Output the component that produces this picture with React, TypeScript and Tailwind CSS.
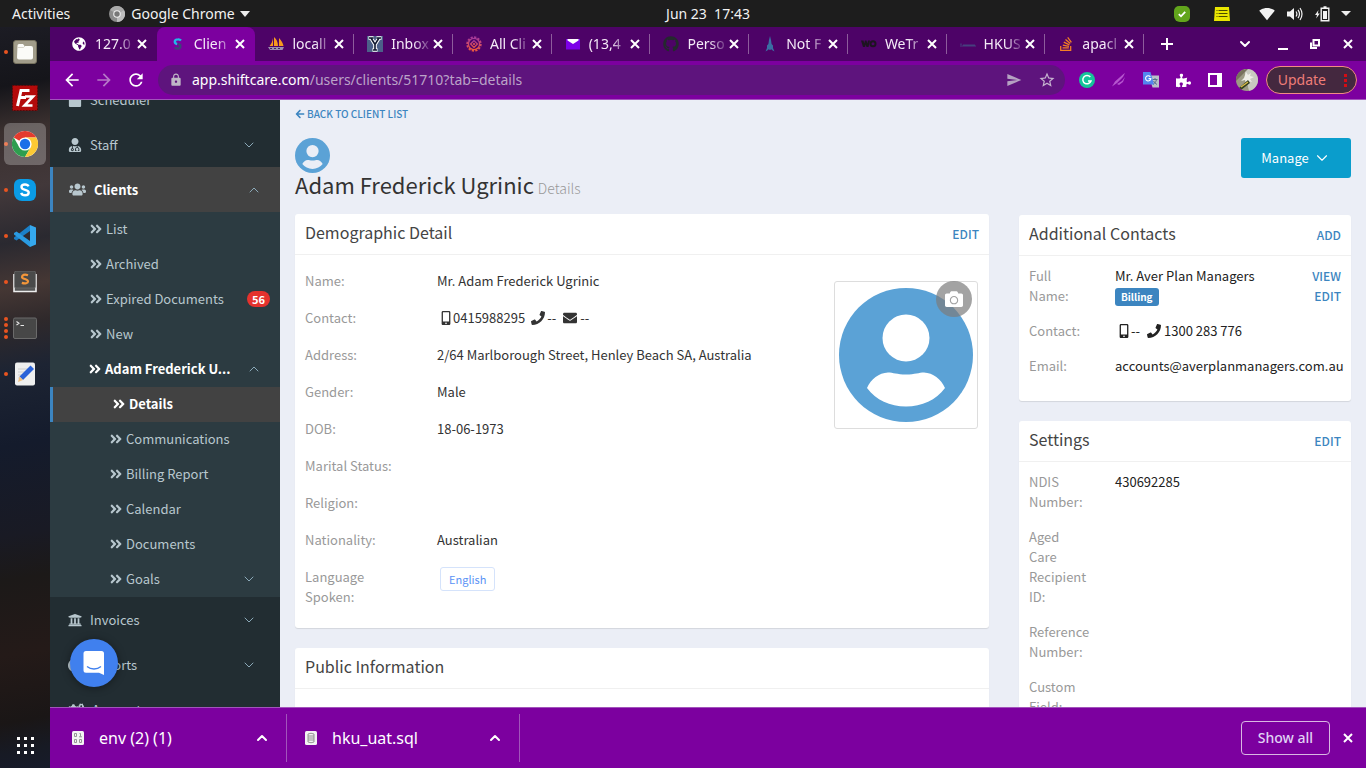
import React from "react";
import {
  FaAngleDoubleRight,
  FaArrowLeft,
  FaCamera,
  FaCalendar,
  FaChartPie,
  FaCogs,
  FaEnvelope,
  FaGithub,
  FaGlobeAmericas,
  FaMobileAlt,
  FaPhone,
  FaPuzzlePiece,
  FaStackOverflow,
  FaUniversity,
  FaUserMd,
  FaUsers,
} from "react-icons/fa";
import {
  MdArrowBack,
  MdArrowForward,
  MdLock,
  MdRefresh,
  MdSend,
  MdSignalWifi4Bar,
  MdStarBorder,
} from "react-icons/md";
import { ChevronDown, ChevronUp } from "lucide-react";

/* ---------- Favicons ---------- */

const ShiftcareIcon = () => (
  <svg viewBox="0 0 16 16" className="size-4">
    <path d="M11 4.500A3.600 3.600 0 0 0 8 3.400C6 3.400 4.800 4.400 4.800 5.700 4.800 7.100 6 7.800 7.200 8" fill="none" stroke="#22b8e8" strokeWidth="2.400" />
    <path d="M7.800 8c1.500.2 2.600.9 2.600 2.200 0 1.500-1.200 2.400-2.800 2.400-1.200 0-2.100-.4-2.800-1.200" fill="none" stroke="#3d4478" strokeWidth="2.400" />
  </svg>
);

const SailIcon = () => (
  <svg viewBox="0 0 16 16" className="size-4">
    <path d="M5 2v8H1.500C3.500 8 4.500 5 5 2zM6 1c2.500 2 4 5 4 9H6zM11 2c2.500 2.500 4 5.500 4.500 8H11z" fill="#f79a1e" />
    <path d="M0 11h16l-1.500 3H2z" fill="#9a8fb0" />
    <path d="M2 12.500h2m2 0h2m2 0h2" stroke="#3b2a60" strokeWidth="1" />
  </svg>
);

const YIcon = () => (
  <svg viewBox="0 0 16 16" className="size-4">
    <rect width="16" height="16" fill="#4c6089" />
    <path d="M1.500 2h5M9.500 2h5M4 2l4 6.500L12 2M8 8v6M5.500 14h5" fill="none" stroke="#fff" strokeWidth="3.600" />
    <path d="M2 2h4.500M9.500 2H14M4 2l4 6.500L12 2M8 8v6M6 14h4" fill="none" stroke="#101830" strokeWidth="1.600" />
  </svg>
);

const GearIcon = () => (
  <svg viewBox="0 0 16 16" className="size-4">
    <defs>
      <linearGradient id="gear" x1="0" y1="0" x2="0" y2="1">
        <stop offset="0" stopColor="#a83a9a" />
        <stop offset="1" stopColor="#f05a3c" />
      </linearGradient>
    </defs>
    <circle cx="8" cy="8" r="6.800" fill="none" stroke="url(#gear)" strokeWidth="1.800" strokeDasharray="2.200 1.350" />
    <circle cx="8" cy="8" r="5.600" fill="none" stroke="url(#gear)" strokeWidth="1.300" />
    <path d="M8 4.600 11.400 8 8 11.400 4.600 8z" fill="none" stroke="url(#gear)" strokeWidth="1.300" />
    <circle cx="8" cy="8" r="1.100" fill="#e0565a" />
  </svg>
);

const MailIcon = () => (
  <svg viewBox="0 0 16 16" className="size-4">
    <rect x="1" y="3" width="14" height="10.500" fill="#7d00e8" />
    <path d="M2.500 3h11v1.500L8 8 2.500 4.500z" fill="#fff" />
  </svg>
);

const TowerIcon = () => (
  <svg viewBox="0 0 16 16" className="size-4">
    <path d="M8 0l1 4 .6 4 1.400 1.500V12l1.500 3.500L10 14l-1-1-.5 1h-1L7 13l-1 1-2.500 1.500L5 12V9.500L6.400 8 7 4z" fill="#3a6fa3" />
  </svg>
);

const WeIcon = () => (
  <svg viewBox="0 0 16 16" className="size-4">
    <path d="M0 4.500h2.500l.7 3 .8-3h1.500l.8 3 .7-3H9L7.500 11h-2l-.8-2.500L4 11H2z" fill="#1c1420" />
    <circle cx="12" cy="7.800" r="2.500" fill="none" stroke="#1c1420" strokeWidth="2" />
  </svg>
);

const HkuIcon = () => (
  <svg viewBox="0 0 16 16" className="size-4">
    <path d="M0 10h16M1 9V7.500M3 9h12" stroke="#46407e" strokeWidth="1.200" fill="none" />
  </svg>
);

const CloseIcon = () => (
  <svg viewBox="0 0 10 10" className="size-[10px]" stroke="currentColor" strokeWidth="2">
    <path d="M1 1l8 8M9 1 1 9" />
  </svg>
);

const tabs = [
  { label: "127.0", icon: <FaGlobeAmericas className="size-[14px] text-white" /> },
  { label: "Clien", icon: <ShiftcareIcon />, active: true },
  { label: "locall", icon: <SailIcon /> },
  { label: "Inbox", icon: <YIcon /> },
  { label: "All Cli", icon: <GearIcon /> },
  { label: "(13,4", icon: <MailIcon /> },
  { label: "Perso", icon: <FaGithub className="size-4 text-[#24292e]" /> },
  { label: "Not F", icon: <TowerIcon /> },
  { label: "WeTr", icon: <WeIcon /> },
  { label: "HKUS", icon: <HkuIcon /> },
  { label: "apacl", icon: <FaStackOverflow className="size-4 text-[#f48024]" /> },
];

/* ---------- Desktop top bar ---------- */

function TopBar() {
  return (
    <header className="grid h-[27px] shrink-0 grid-cols-3 items-center bg-[#1d1d1d] px-3 text-sm text-[#f2f2f2]">
      <div className="flex items-center">
        <span>Activities</span>
        <svg viewBox="0 0 16 16" className="ml-[39px] size-4">
          <circle cx="8" cy="8" r="8" fill="#8b8b8b" />
          <path d="M8 8 1.100 4A8 8 0 0 1 15 4z" fill="#a9a9a9" />
          <path d="M8 8l7-4a8 8 0 0 1-7 12z" fill="#bdbdbd" />
          <circle cx="8" cy="8" r="3.800" fill="#eee" />
          <circle cx="8" cy="8" r="2.700" fill="#777" />
        </svg>
        <span className="ml-[6px]">Google Chrome</span>
        <svg viewBox="0 0 10 6" className="ml-[5px] h-[6px] w-[10px]">
          <path d="M0 0h10L5 6z" fill="#eee" />
        </svg>
      </div>
      <div className="pl-[50px] text-center whitespace-pre">Jun 23  17:43</div>
      <div className="flex items-center justify-end pr-[3px]">
        <svg viewBox="0 0 16 16" className="mr-[24px] size-4">
          <path d="M5 0h6a5 5 0 0 1 5 5v6a5 5 0 0 1-5 5H6a6 6 0 0 1-6-6V5a5 5 0 0 1 5-5z" fill="#62a51c" />
          <path d="M4.800 8.200 7 10.300l4.200-4.500" fill="none" stroke="#fff" strokeWidth="1.800" />
        </svg>
        <svg viewBox="0 0 16 14" className="mr-[29px] h-[14px] w-4">
          <path d="M1 0h14l1 14H0z" fill="#e9e600" />
          <path d="M2.500 3.500h1m1 0h9M2.500 6.500h1m1 0h9M2.500 9.500h1m1 0h9" stroke="#4a4a00" strokeWidth="1.200" />
        </svg>
        <MdSignalWifi4Bar className="mr-[12px] size-4 text-[#f2f2f2]" />
        <svg viewBox="0 0 16 14" className="mr-[12px] h-[14px] w-4" fill="none" stroke="#f2f2f2">
          <path d="M0 4.500h3L7 1v12L3 9.500H0z" fill="#f2f2f2" stroke="none" />
          <path d="M9 4.500q1.800 2.500 0 5M11 2.800q3 4.200 0 8.400M13 1q4 6 0 12" strokeWidth="1.200" />
        </svg>
        <svg viewBox="0 0 15 16" className="mr-[11px] h-4 w-[15px]">
          <path d="M3.500 4 0 9h2l-.8 3.500L4.800 7.500h-2z" fill="#f2f2f2" />
          <path d="M6.200 2.200h7.600v12.600H6.200zM8.500 1h3" fill="none" stroke="#f2f2f2" strokeWidth="1.400" />
          <path d="M8 5h4v8H8z" fill="#f2f2f2" />
        </svg>
        <svg viewBox="0 0 10 5" className="h-[5px] w-[10px]">
          <path d="M0 0h10L5 5z" fill="#eee" />
        </svg>
      </div>
    </header>
  );
}

/* ---------- Dock ---------- */

const FilesIcon = () => (
  <svg viewBox="0 0 24 24" className="size-6">
    <rect x="0.500" y="0.500" width="23" height="23" rx="2.500" fill="#a19c8a" stroke="#77725f" />
    <path d="M4.500 5.500a1.500 1.500 0 0 1 1.500-1.500h4l1.500 2H18a2 2 0 0 1 2 2v9.500a2 2 0 0 1-2 2H6a2 2 0 0 1-2-2z" fill="#fbfbf8" />
    <path d="M4.500 7.500h6l1.500-1.500" fill="none" stroke="#d0cdc0" strokeWidth=".8" />
  </svg>
);

const FilezillaIcon = () => (
  <svg viewBox="0 0 26 26" className="size-[26px]">
    <rect x="0.500" y="0.500" width="25" height="25" fill="#b30a0a" />
    <rect x="0.500" y="0.500" width="25" height="25" fill="none" stroke="#5e0505" strokeDasharray="1.500 1.500" />
    <path d="M5.500 21 9 5.500h8.500M8 12.500h6" fill="none" stroke="#fff" strokeWidth="3" />
    <path d="M13 11.500h8l-8.500 9h8" fill="none" stroke="#fff" strokeWidth="2.600" />
  </svg>
);

const ChromeIcon = () => (
  <svg viewBox="0 0 26 26" className="size-[26px]">
    <circle cx="13" cy="13" r="13" fill="#fff" />
    <path d="M13 13 1.740 6.500A13 13 0 0 1 24.260 6.500H13z" fill="#e33b2e" />
    <path d="M13 13 7.400 16.200 1.740 6.500A13 13 0 0 0 13 26l5.600-9.700z" fill="#2f9e4f" />
    <path d="M13 6.500h11.260A13 13 0 0 1 13 26l5.700-9.800z" fill="#fcc934" />
    <circle cx="13" cy="13" r="6.600" fill="#fff" />
    <circle cx="13" cy="13" r="5.200" fill="#1a6fe8" />
  </svg>
);

const SkypeIcon = () => (
  <svg viewBox="0 0 22 22" className="size-[22px]">
    <path d="M6 0h8a8 8 0 0 1 8 8v8a6 6 0 0 1-6 6H8a8 8 0 0 1-8-8V6a6 6 0 0 1 6-6z" fill="#0a9be6" />
    <path d="M14.500 7.400C14 6.200 12.700 5.500 11 5.500c-2 0-3.500.9-3.500 2.500 0 3.800 7.200 1.800 7.200 5.500 0 1.800-1.600 2.800-3.600 2.800-1.900 0-3.400-.8-3.900-2.400" fill="none" stroke="#fff" strokeWidth="2.400" />
  </svg>
);

const CodeIcon = () => (
  <svg viewBox="0 0 24 24" className="size-6">
    <path d="M17 1v6L3.500 16.500 1 15v-1.500z" fill="#1b80c8" />
    <path d="M17 23v-6L3.500 7.500 1 9v1.500z" fill="#2a9be2" />
    <path d="M17 1l6 2.500v17L17 23z" fill="#35a8ee" />
  </svg>
);

const SublimeIcon = () => (
  <svg viewBox="0 0 24 22" className="h-[22px] w-6">
    <path d="M1 3v17.500h22V3" fill="#555" stroke="#eee" strokeWidth="1.600" />
    <rect x="1.500" y="0" width="21" height="17" rx="1.500" fill="#4a4a4a" stroke="#777" strokeWidth=".6" />
    <path d="M15 4.300C11.500 3 9 4 9 5.900c0 2.400 6 1.900 6 4.500 0 1.900-2.700 2.500-6.200 1.500" fill="none" stroke="#f3963a" strokeWidth="2.200" />
  </svg>
);

const TerminalIcon = () => (
  <svg viewBox="0 0 24 22" className="h-[22px] w-6">
    <rect x="0.500" y="1" width="23" height="20.500" rx="1.500" fill="#474747" stroke="#6b6b6b" />
    <path d="M3.500 4.500 6 6.300 3.500 8M7.500 8.500h3.500" fill="none" stroke="#e8e8e8" strokeWidth="1.100" />
  </svg>
);

const EditorIcon = () => (
  <svg viewBox="0 0 22 24" className="h-6 w-[22px]">
    <rect x="1" y="0.500" width="20" height="23" rx="2" fill="#efefef" />
    <path d="M4 7h10M4 10h9M4 13h6M4 16h4" stroke="#cfcfcf" />
    <path d="M16.500 3.500 20 7 9 18l-3.500-3.500z" fill="#2a62d8" />
    <path d="M5.500 14.500 9 18l-5 2z" fill="#f0c080" />
  </svg>
);

const dock = [
  { name: "Files", icon: <FilesIcon />, dots: 1 },
  { name: "FileZilla", icon: <FilezillaIcon />, dots: 0 },
  { name: "Google Chrome", icon: <ChromeIcon />, dots: 1, active: true },
  { name: "Skype", icon: <SkypeIcon />, dots: 1 },
  { name: "Visual Studio Code", icon: <CodeIcon />, dots: 1 },
  { name: "Sublime Text", icon: <SublimeIcon />, dots: 1 },
  { name: "Terminal", icon: <TerminalIcon />, dots: 4 },
  { name: "Text Editor", icon: <EditorIcon />, dots: 1 },
];

function Dock() {
  return (
    <nav
      aria-label="Dock"
      className="flex w-[50px] shrink-0 flex-col justify-between bg-[linear-gradient(170deg,#1c1c24_0%,#15151a_8%,#3a302f_14%,#42383a_22%,#2a2930_29%,#453734_35%,#2f292b_40%,#1d2433_46%,#141b2c_56%,#191a24_68%,#1c1918_74%,#241a18_84%,#1a1616_93%,#171a24_97%,#171b2a_100%)] pt-[2px] pb-[14px]"
    >
      <ul>
        {dock.map((d) => (
          <li key={d.name} className="flex h-[46px] items-center">
            <span className="flex w-1 flex-col items-end gap-[2px]">
              {Array.from({ length: d.dots }, (_, i) => (
                <i key={i} className="-mr-1 block size-1 shrink-0 rounded-full bg-[#e95420]" />
              ))}
            </span>
            <button
              aria-label={d.name}
              className={
                d.active
                  ? "flex h-[42px] w-[42px] items-center justify-center rounded-md bg-white/25"
                  : "flex h-[42px] w-[42px] items-center justify-center rounded-md"
              }
            >
              {d.icon}
            </button>
          </li>
        ))}
      </ul>
      <button aria-label="Show applications" className="mx-auto grid grid-cols-3 gap-[4px]">
        {Array.from({ length: 9 }, (_, i) => (
          <i key={i} className="block size-[3px] bg-white" />
        ))}
      </button>
    </nav>
  );
}

/* ---------- Browser chrome ---------- */

function TabStrip() {
  return (
    <div className="flex h-[34px] shrink-0 items-stretch bg-[#4d0367] pl-2">
      <div className="flex max-w-[1086px] min-w-0 flex-1">
        {tabs.map((t, i) => (
          <div
            key={t.label}
            className={
              t.active
                ? "flex min-w-0 flex-1 items-center rounded-t-lg bg-[#7c009f] pl-[13px]"
                : "flex min-w-0 flex-1 items-center pl-[13px]"
            }
          >
            <span className="flex w-4 shrink-0 justify-center">{t.icon}</span>
            <span className="ml-2 min-w-0 flex-1 mask-r-from-60% mask-r-to-110% text-sm whitespace-nowrap text-[#f4eaf7]">
              {t.label}
            </span>
            <button aria-label={"Close " + t.label} className="ml-1 shrink-0 text-white">
              <CloseIcon />
            </button>
            <span className={i > 1 ? "ml-[9px] h-5 w-px bg-[#8d5c9c]" : "ml-[9px] h-5 w-px"} />
          </div>
        ))}
      </div>
      <button aria-label="New tab" className="ml-[17px] text-white">
        <svg viewBox="0 0 12 12" className="size-3" stroke="currentColor" strokeWidth="2">
          <path d="M6 0v12M0 6h12" />
        </svg>
      </button>
      <div className="ml-auto flex items-center pr-[13px] text-white">
        <button aria-label="Search tabs">
          <ChevronDown className="size-4" strokeWidth={3} />
        </button>
        <button aria-label="Minimise" className="ml-[25px] flex h-3 items-end">
          <span className="block h-[2px] w-[10px] bg-white" />
        </button>
        <button aria-label="Restore" className="ml-[22px]">
          <svg viewBox="0 0 10 10" className="size-[10px]" fill="none" stroke="currentColor" strokeWidth="2">
            <path d="M3.500 1H9v5.500H3.500zM1 3.500V9h6" />
          </svg>
        </button>
        <button aria-label="Close window" className="ml-[23px]">
          <CloseIcon />
        </button>
      </div>
    </div>
  );
}

function Toolbar() {
  return (
    <div className="flex h-[39px] shrink-0 items-center border-b border-[#a254bb] bg-[#7c009f] pr-[9px] pl-3 text-white">
      <button aria-label="Back">
        <MdArrowBack className="size-5" />
      </button>
      <button aria-label="Forward" className="ml-3 text-[#b678c8]">
        <MdArrowForward className="size-5" />
      </button>
      <button aria-label="Reload" className="ml-3">
        <MdRefresh className="size-5" />
      </button>
      <div className="ml-3 flex h-[30px] min-w-0 flex-1 items-center rounded-full bg-[#5e147d] pr-[9px] pl-[11px]">
        <MdLock className="size-[14px] shrink-0 text-[#bfb6c6]" />
        <div className="ml-[9px] min-w-0 flex-1 truncate text-sm text-[#bba3c8]">
          <span className="text-white">app.shiftcare.com</span>/users/clients/51710?tab=details
        </div>
        <button aria-label="Send this page" className="text-[#b5a2c2]">
          <MdSend className="size-4" />
        </button>
        <button aria-label="Bookmark this page" className="ml-4 text-[#c6b4d0]">
          <MdStarBorder className="size-[18px]" />
        </button>
      </div>
      <button aria-label="Grammarly" className="ml-[14px]">
        <svg viewBox="0 0 16 16" className="size-4">
          <circle cx="8" cy="8" r="8" fill="#15c39a" />
          <path d="M11.300 5A4.200 4.200 0 1 0 12 9H9" fill="none" stroke="#fff" strokeWidth="1.500" />
        </svg>
      </button>
      <button aria-label="Feather extension" className="ml-4">
        <svg viewBox="0 0 16 16" className="size-4">
          <path d="M1 14.500 4 9.500 12.500 2 14 1l-2 4-6 6zM6 12l5-3 3-4-2 5-4 3z" fill="#b655cf" />
        </svg>
      </button>
      <button aria-label="Google Translate" className="ml-4">
        <svg viewBox="0 0 16 16" className="size-4">
          <path d="M6 3.500h10v12H9.500z" fill="#b9c1c9" />
          <path d="M9.500 7.500h5M12 6v1.500M13.500 7.500c-.5 2.500-2 4-3.500 5M10.500 9c.8 1.500 2 2.500 3.500 3.500" fill="none" stroke="#56708a" />
          <path d="M0 0h7.500L11 12.500H0z" fill="#5386ee" />
          <path d="M7.300 4.800A2.600 2.600 0 1 0 7.800 6.600H5.500" fill="none" stroke="#fff" strokeWidth="1.100" />
        </svg>
      </button>
      <button aria-label="Extensions" className="ml-[17px]">
        <FaPuzzlePiece className="size-[15px]" />
      </button>
      <button aria-label="Side panel" className="ml-[17px]">
        <svg viewBox="0 0 14 14" className="size-[14px]">
          <path d="M1 1h12v12H1z" fill="none" stroke="#fff" strokeWidth="2" />
          <path d="M9 1h4v12H9z" fill="#fff" />
        </svg>
      </button>
      <button aria-label="Profile" className="ml-[14px]">
        <svg viewBox="0 0 22 22" className="size-[22px]">
          <defs>
            <clipPath id="face">
              <circle cx="11" cy="11" r="11" />
            </clipPath>
          </defs>
          <g clipPath="url(#face)">
            <rect width="22" height="22" fill="#9c9a84" />
            <path d="M8 0h14v22h-9z" fill="#c9cac0" />
            <path d="M0 12 12 0H0z" fill="#77715c" />
            <path d="M10 3l2 3 3-2-1 3 4 1-4 2 2 3-4-1-2 3-1-4-4 1 3-3z" fill="#eeeee6" />
            <path d="M3 19 12 11l2 3-9 7z" fill="#33401f" />
            <path d="M5 18l7-5" stroke="#e0c04a" strokeWidth="1.200" />
          </g>
        </svg>
      </button>
      <button className="ml-2 flex h-7 items-center rounded-full border border-[#f28b82] bg-[#44283f] pr-[9px] pl-[11px] text-sm text-[#ee7d78]">
        Update
        <span className="ml-[18px] flex flex-col gap-[2px]">
          <i className="block size-[3px] bg-[#d40c14]" />
          <i className="block size-[3px] bg-[#d40c14]" />
          <i className="block size-[3px] bg-[#d40c14]" />
        </span>
      </button>
    </div>
  );
}

function Downloads() {
  return (
    <footer className="flex h-[61px] shrink-0 items-center border-t border-[#a254bb] bg-[#7c009f] pr-[13px] text-white">
      <div className="flex h-12 w-[237px] items-center border-r border-[#a254bb] pr-4 pl-[22px]">
        <svg viewBox="0 0 12 14" className="h-[14px] w-3">
          <rect width="12" height="14" rx="1.500" fill="#f3f3f3" />
          <path d="M2.500 2.500h2v3h-2zM2.500 8.500h2v3h-2zM7.500 8.500h2v3h-2zM7.500 2.500h1v3M7 5.800h3" fill="none" stroke="#8a8a8a" strokeWidth=".9" />
        </svg>
        <span className="ml-[15px] flex-1 text-base">env (2) (1)</span>
        <button aria-label="Options for env (2) (1)">
          <ChevronUp className="size-4" strokeWidth={3} />
        </button>
      </div>
      <div className="flex h-12 w-[233px] items-center border-r border-[#a254bb] pr-4 pl-[18px]">
        <svg viewBox="0 0 12 14" className="h-[14px] w-3">
          <rect width="12" height="14" rx="1.500" fill="#f3f3f3" />
          <path d="M3 3q3-1.500 6 0v8q-3 1.500-6 0zM3 5h6M3 7h6M3 9h6" fill="none" stroke="#8a8a8a" strokeWidth=".9" />
        </svg>
        <span className="ml-[15px] flex-1 text-base">hku_uat.sql</span>
        <button aria-label="Options for hku_uat.sql">
          <ChevronUp className="size-4" strokeWidth={3} />
        </button>
      </div>
      <button className="ml-auto h-[34px] w-[89px] rounded border border-[#d9b8e3] text-sm font-medium text-[#e0d4f5]">Show all</button>
      <button aria-label="Close downloads" className="ml-[13px]">
        <CloseIcon />
      </button>
    </footer>
  );
}

/* ---------- Application sidebar ---------- */

type NavProps = {
  label: string;
  icon: React.ReactNode;
  open?: boolean;
  closed?: boolean;
  active?: boolean;
};

const OpenMark = () => <ChevronUp className="size-4 text-[#8ba9b8]" strokeWidth={1.500} />;
const ClosedMark = () => <ChevronDown className="size-4 text-[#8ba9b8]" strokeWidth={1.500} />;

function NavItem({ label, icon, open, closed, active }: NavProps) {
  return (
    <li>
      <a
        href="#"
        className={
          active
            ? "flex h-[45px] items-center border-l-[3px] border-[#3c85c0] bg-[#424242] pr-[18px] pl-4 font-bold text-white"
            : "flex h-[45px] items-center border-l-[3px] border-transparent pr-[23px] pl-[15px]"
        }
      >
        <span className="text-[#b8c7ce]">{icon}</span>
        <span className="ml-2 flex-1">{label}</span>
        {open && <OpenMark />}
        {closed && <ClosedMark />}
      </a>
    </li>
  );
}

type SubProps = {
  label: string;
  deep?: boolean;
  active?: boolean;
  bold?: boolean;
  children?: React.ReactNode;
};

function SubItem({ label, deep, active, bold, children }: SubProps) {
  const tone = active
    ? "flex h-[35px] items-center border-l-[3px] border-[#3c85c0] bg-[#424242] pb-[2px] pl-[59px] font-bold text-white"
    : deep
      ? "flex h-[35px] items-center pb-[2px] pr-[23px] pl-[59px]"
      : bold
        ? "flex h-[35px] items-center pb-[2px] pr-[18px] pl-[38px] font-bold text-white"
        : "flex h-[35px] items-center pb-[2px] pr-[10px] pl-[39px]";
  return (
    <li>
      <a href="#" className={tone}>
        <FaAngleDoubleRight className="size-[14px] shrink-0" />
        <span className="ml-[3px] flex-1 whitespace-nowrap">{label}</span>
        {children}
      </a>
    </li>
  );
}

function Sidebar() {
  return (
    <aside className="relative w-[230px] shrink-0 overflow-hidden bg-[#222d32] font-['Noto_Sans_CJK_SC',sans-serif] text-[13px] text-[#b8c7ce]">
      <ul className="-mt-[23px]">
        <NavItem label="Scheduler" icon={<FaCalendar className="size-[14px]" />} />
        <NavItem label="Staff" icon={<FaUserMd className="size-[14px]" />} closed />
        <NavItem label="Clients" icon={<FaUsers className="size-[17px]" />} open active />
        <li>
          <ul className="bg-[#2c3b41]">
            <SubItem label="List" />
            <SubItem label="Archived" />
            <SubItem label="Expired Documents">
              <span className="rounded-full bg-[#e5322d] px-[5px] text-[11px] leading-4 font-bold text-white">56</span>
            </SubItem>
            <SubItem label="New" />
            <SubItem label="Adam Frederick U..." bold>
              <OpenMark />
            </SubItem>
            <SubItem label="Details" deep active />
            <SubItem label="Communications" deep />
            <SubItem label="Billing Report" deep />
            <SubItem label="Calendar" deep />
            <SubItem label="Documents" deep />
            <SubItem label="Goals" deep>
              <ClosedMark />
            </SubItem>
          </ul>
        </li>
        <NavItem label="Invoices" icon={<FaUniversity className="size-[14px]" />} closed />
        <NavItem label="Reports" icon={<FaChartPie className="size-[14px]" />} closed />
        <NavItem label="Account" icon={<FaCogs className="size-4" />} closed />
      </ul>
      <button
        aria-label="Open messenger"
        className="absolute bottom-5 left-5 flex size-12 items-center justify-center rounded-full bg-[#4080ee] shadow-[0_1px_8px_rgba(0,0,0,0.4)]"
      >
        <svg viewBox="0 0 24 26" className="h-[26px] w-6">
          <path d="M4 1h15.500a2.500 2.500 0 0 1 2.500 2.500V25l-5-2.200H4A2.500 2.500 0 0 1 1.500 20.300V3.500A2.500 2.500 0 0 1 4 1z" fill="#fff" />
          <path d="M5 16.500c4 3.300 10 3.300 14 0" fill="none" stroke="#4080ee" strokeWidth="1.300" />
        </svg>
      </button>
    </aside>
  );
}

/* ---------- Client page ---------- */

function Card({ title, action, children }: { title: string; action?: string; children?: React.ReactNode }) {
  return (
    <section className="rounded-[3px] bg-white shadow-[0_1px_1px_rgba(0,0,0,0.1)]">
      <header className="flex h-[41px] items-center justify-between border-b border-[#f0f0f0] px-[10px] pb-1">
        <h2 className="text-base leading-5">{title}</h2>
        {action && (
          <a href="#" className="pt-1 text-xs font-medium text-[#3c85c0]">
            {action}
          </a>
        )}
      </header>
      {children}
    </section>
  );
}

function Row({ label, children }: { label: string; children?: React.ReactNode }) {
  return (
    <div className="flex">
      <dt className="w-[132px] shrink-0 pr-10 text-[#999]">{label}</dt>
      <dd className="flex-1 text-[#333]">{children}</dd>
    </div>
  );
}

function SideRow({ label, children }: { label: string; children?: React.ReactNode }) {
  return (
    <div className="flex">
      <dt className="w-[86px] shrink-0 whitespace-pre-line text-[#999]">{label}</dt>
      <dd className="flex min-w-0 flex-1 justify-between text-[#222]">{children}</dd>
    </div>
  );
}

const Avatar = ({ className }: { className: string }) => (
  <svg viewBox="0 0 134 134" className={className}>
    <circle cx="67" cy="67" r="67" fill="#5ba2d6" />
    <ellipse cx="67" cy="50" rx="23.500" ry="23.500" fill="currentColor" />
    <path d="M28 100c4-9 12-15 21-15.500 5 0 9 2 18 2s13-2 18-2c9 .5 17 6.500 21 15.500-9 12-23 18.500-39 18.500S37 112 28 100z" fill="currentColor" />
  </svg>
);

function ClientPage() {
  return (
    <main className="min-w-0 flex-1 overflow-hidden bg-[#ebeef6] px-[15px] pt-1 font-['Noto_Sans_CJK_SC',sans-serif] text-[13px] leading-5 text-[#444]">
      <a href="#" className="flex h-5 items-center text-[10px] font-medium text-[#3c85c0]">
        <FaArrowLeft className="mr-[2px] size-[10px]" />
        BACK TO CLIENT LIST
      </a>
      <div className="mt-[14px] flex items-start justify-between">
        <div>
          <Avatar className="size-[35px] text-[#ebeef6]" />
          <h1 className="text-[22px] leading-[22px] text-[#333]">
            Adam Frederick Ugrinic
            <small className="ml-1 text-sm leading-[22px] font-light text-[#999]">Details</small>
          </h1>
        </div>
        <button className="flex h-10 w-[110px] items-center justify-center rounded-[3px] bg-[#0a9dcc] text-white">
          Manage
          <ChevronDown className="ml-1 size-[18px]" strokeWidth={1.500} />
        </button>
      </div>
      <div className="mt-[15px] grid grid-cols-3 gap-x-[30px]">
        <div className="col-span-2 flex flex-col gap-5">
          <Card title="Demographic Detail" action="EDIT">
            <div className="flex justify-between pr-[11px] pb-[21px] pl-[10px]">
              <dl className="flex flex-1 flex-col gap-[17px] pt-4">
                <Row label="Name:">Mr. Adam Frederick Ugrinic</Row>
                <Row label="Contact:">
                  <span className="flex items-center pl-[2px]">
                    <FaMobileAlt className="size-[14px]" />
                    0415988295
                    <FaPhone className="mr-[2px] ml-[6px] size-[14px]" />
                    --
                    <FaEnvelope className="mr-[3px] ml-[7px] size-[14px]" />
                    --
                  </span>
                </Row>
                <Row label="Address:">2/64 Marlborough Street, Henley Beach SA, Australia</Row>
                <Row label="Gender:">Male</Row>
                <Row label="DOB:">18-06-1973</Row>
                <Row label="Marital Status:" />
                <Row label="Religion:" />
                <Row label="Nationality:">Australian</Row>
                <Row label="Language Spoken:">
                  <span className="ml-[3px] inline-block rounded-[3px] border border-[#d5e3fb] px-2 text-[11px] leading-[22px] text-[#5b93f5]">
                    English
                  </span>
                </Row>
              </dl>
              <figure className="relative mt-[26px] h-[148px] w-36 rounded-[3px] border border-[#ddd] px-1 py-[6px]">
                <Avatar className="size-[134px] text-white" />
                <button
                  aria-label="Change photo"
                  className="absolute -top-px right-[5px] flex size-9 items-center justify-center rounded-full bg-[#7c7c7c]/70 text-white"
                >
                  <FaCamera className="size-[18px]" />
                </button>
              </figure>
            </div>
          </Card>
          <Card title="Public Information">
            <div className="h-40" />
          </Card>
        </div>
        <div className="mt-px flex flex-col gap-5">
          <Card title="Additional Contacts" action="ADD">
            <dl className="flex flex-col gap-[15px] px-[10px] pt-[10px] pb-[25px]">
              <SideRow label={"Full\nName:"}>
                <span>
                  <span className="block">Mr. Aver Plan Managers</span>
                  <span className="mt-[2px] block w-fit rounded-[3px] bg-[#3c85c0] px-[6px] text-[10px] leading-[18px] font-bold text-white">
                    Billing
                  </span>
                </span>
                <span className="flex flex-col items-end text-xs leading-5 font-medium text-[#3c85c0]">
                  <a href="#">VIEW</a>
                  <a href="#">EDIT</a>
                </span>
              </SideRow>
              <SideRow label="Contact:">
                <span className="flex items-center pl-[2px]">
                  <FaMobileAlt className="size-[14px]" />
                  --
                  <FaPhone className="mr-[3px] ml-[7px] size-[14px]" />
                  1300 283 776
                </span>
              </SideRow>
              <SideRow label="Email:">accounts@averplanmanagers.com.au</SideRow>
            </dl>
          </Card>
          <Card title="Settings" action="EDIT">
            <dl className="flex flex-col gap-[15px] px-[10px] pt-[10px] pb-[25px]">
              <SideRow label={"NDIS\nNumber:"}>430692285</SideRow>
              <SideRow label={"Aged\nCare\nRecipient\nID:"} />
              <SideRow label={"Reference\nNumber:"} />
              <SideRow label={"Custom\nField:"} />
            </dl>
          </Card>
        </div>
      </div>
    </main>
  );
}

export default function App() {
  return (
    <div className="flex h-screen flex-col overflow-hidden font-['Noto_Sans',sans-serif]">
      <TopBar />
      <div className="flex min-h-0 flex-1">
        <Dock />
        <div className="flex min-w-0 flex-1 flex-col">
          <TabStrip />
          <Toolbar />
          <div className="flex min-h-0 flex-1">
            <Sidebar />
            <ClientPage />
          </div>
          <Downloads />
        </div>
      </div>
    </div>
  );
}
